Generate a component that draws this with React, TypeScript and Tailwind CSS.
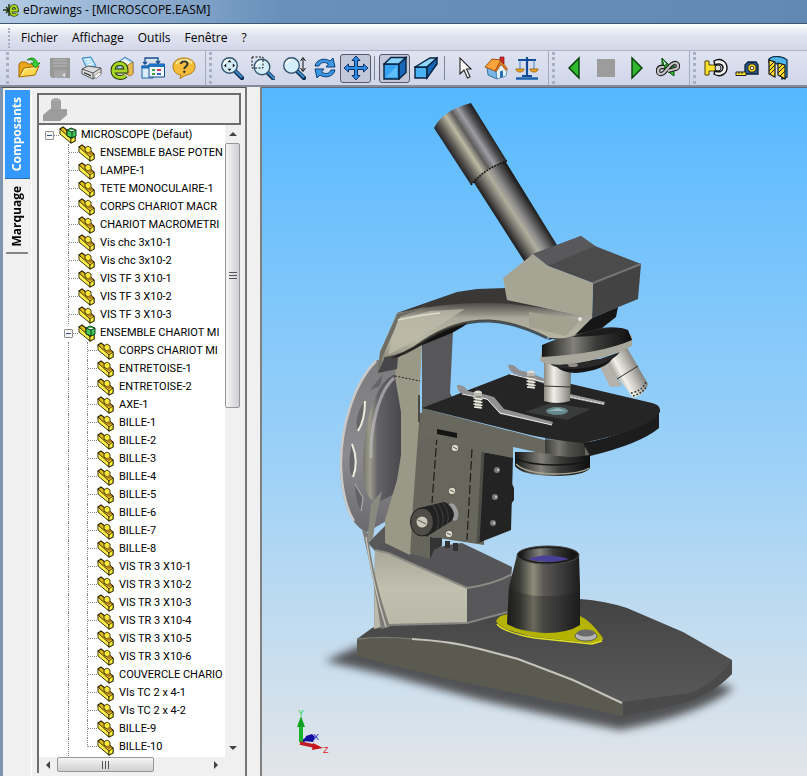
import type { ReactNode } from "react";
import { clsx } from "clsx";

type Part = {
  name: string;
  depth: number;
  assembly?: boolean;
};

const parts: Part[] = [
  { name: "MICROSCOPE (Défaut)", depth: 0, assembly: true },
  { name: "ENSEMBLE BASE POTEN", depth: 1 },
  { name: "LAMPE-1", depth: 1 },
  { name: "TETE MONOCULAIRE-1", depth: 1 },
  { name: "CORPS CHARIOT MACR", depth: 1 },
  { name: "CHARIOT MACROMETRI", depth: 1 },
  { name: "Vis chc 3x10-1", depth: 1 },
  { name: "Vis chc 3x10-2", depth: 1 },
  { name: "VIS TF 3 X10-1", depth: 1 },
  { name: "VIS TF 3 X10-2", depth: 1 },
  { name: "VIS TF 3 X10-3", depth: 1 },
  { name: "ENSEMBLE CHARIOT MI", depth: 1, assembly: true },
  { name: "CORPS CHARIOT MI", depth: 2 },
  { name: "ENTRETOISE-1", depth: 2 },
  { name: "ENTRETOISE-2", depth: 2 },
  { name: "AXE-1", depth: 2 },
  { name: "BILLE-1", depth: 2 },
  { name: "BILLE-2", depth: 2 },
  { name: "BILLE-3", depth: 2 },
  { name: "BILLE-4", depth: 2 },
  { name: "BILLE-5", depth: 2 },
  { name: "BILLE-6", depth: 2 },
  { name: "BILLE-7", depth: 2 },
  { name: "BILLE-8", depth: 2 },
  { name: "VIS TR 3 X10-1", depth: 2 },
  { name: "VIS TR 3 X10-2", depth: 2 },
  { name: "VIS TR 3 X10-3", depth: 2 },
  { name: "VIS TR 3 X10-4", depth: 2 },
  { name: "VIS TR 3 X10-5", depth: 2 },
  { name: "VIS TR 3 X10-6", depth: 2 },
  { name: "COUVERCLE CHARIO", depth: 2 },
  { name: "VIs TC 2 x 4-1", depth: 2 },
  { name: "VIs TC 2 x 4-2", depth: 2 },
  { name: "BILLE-9", depth: 2 },
  { name: "BILLE-10", depth: 2 },
];

const menus = ["Fichier", "Affichage", "Outils", "Fenêtre", "?"];

/* ---------- icons ---------- */

function Icon({ children }: { children: ReactNode }) {
  return (
    <svg viewBox="0 0 24 24" className="size-6" aria-hidden="true">
      {children}
    </svg>
  );
}

function Lens() {
  return (
    <>
      <path d="M15 15l7 7" stroke="#0c2c50" strokeWidth="4.400" strokeLinecap="round" />
      <path d="M16 15.500l5.500 5.500" stroke="#3f8fd0" strokeWidth="2" strokeLinecap="round" />
      <circle cx="9.500" cy="9.500" r="7.800" fill="#d4eefb" stroke="#35556f" strokeWidth="1.400" />
      <path d="M4 9a5.500 5.500 0 0 1 5-5" fill="none" stroke="#fff" strokeWidth="2" />
    </>
  );
}

const icons: Record<string, ReactNode> = {
  open: (
    <>
      <path d="M2 21V8l2-2h5l2 2h7v5" fill="#e8a81c" stroke="#a86a00" />
      <path d="M2 21l5-9 15-2-4 9z" fill="#ffd84f" stroke="#a86a00" />
      <path d="M4 20l4-7 11-1" fill="none" stroke="#fff3b0" />
      <path d="M10 4c5-4 10-1 10 3h3l-4.500 5L14 7h3c0-3-3-4-7-3z" fill="#35d435" stroke="#0d7a16" strokeWidth="0.800" />
    </>
  ),
  save: (
    <>
      <path d="M2 2h20v20H4l-2-2z" fill="#999" />
      <path d="M5 4h14M5 7h14M5 10h14" stroke="#b9b9b9" />
      <path d="M6 14h12v8H6z" fill="#a5a5a5" />
      <path d="M14 19l3-2v4z" fill="#e2e2e2" />
    </>
  ),
  print: (
    <>
      <path d="M3 2l9-1 5 9-9 3z" fill="#a8dcfb" stroke="#3c86bc" />
      <path d="M6 4l5-.5M7.500 6.500l5-1M8.500 9l6-1.500" stroke="#fff" />
      <path d="M3 13l6-3 13 2v6l-8 5-11-5z" fill="#dcdcdc" stroke="#555" />
      <path d="M3 13l11 4 8-5M14 17v6" fill="none" stroke="#555" />
      <path d="M5 16l7 3v1.500l-7-3z" fill="#444" />
      <path d="M15 20l5-3.500 3 1-6 5z" fill="#fff" stroke="#777" strokeWidth="0.700" />
    </>
  ),
  mail: (
    <>
      <path d="M7 7l8-6 8 5v11l-4 2L8 14z" fill="#9fd0f3" stroke="#4385b5" />
      <path d="M9 6l6-3 6 4-6 5z" fill="#fff" />
      <path d="M9 14l14-8v12l-3 2z" fill="#e9bb54" stroke="#a66d1a" strokeWidth="0.800" />
      <path d="M4.500 15H16c.3-5-2.500-7.500-6-7.500-4.200 0-7 3-7 7s2.800 7 7 7c2.500 0 4.500-.8 5.500-2" fill="none" stroke="#273700" strokeWidth="5" />
      <path d="M4.500 15H16c.3-5-2.500-7.500-6-7.500-4.200 0-7 3-7 7s2.800 7 7 7c2.500 0 4.500-.8 5.500-2" fill="none" stroke="#a8d624" strokeWidth="3" />
    </>
  ),
  window: (
    <>
      <path d="M4 8V2h13v5M2 6l2 2 2-2M15 5l2 2.500L19 5" fill="none" stroke="#174f8d" strokeWidth="1.300" />
      <path d="M1 10h11v12H1z" fill="#d9ecfb" stroke="#1660aa" />
      <path d="M0.500 9.500h9v3h-9z" fill="#1d6dbb" />
      <path d="M8 8h15.500v13H8z" fill="#f3f9ff" stroke="#104f95" />
      <path d="M8 8h15.500v3H8z" fill="#1e75c8" />
      <path d="M11 13h3v2h-3zM11 17h3v2h-3z" fill="#3f9d50" />
      <path d="M16 13h4v2h-4z" fill="#d43a62" />
      <path d="M16 17h4v2h-4z" fill="#3a61c4" />
    </>
  ),
  help: (
    <>
      <path d="M12 2c6.500 0 11 3.500 11 8.500S19 18.500 14 19l-6 3.500L9 19c-5-.5-8-4-8-8.500C1 5.500 5.500 2 12 2z" fill="#f3bd3b" stroke="#b37a14" />
      <path d="M4 8c2-4 11-6 16-1" fill="none" stroke="#ffe9a1" strokeWidth="2" />
      <path d="M9 8c0-3.500 6.500-3.500 6.500 0 0 2.500-3.200 2.500-3.200 5" fill="none" stroke="#333" strokeWidth="1.900" />
      <circle cx="12.300" cy="15.700" r="1.200" fill="#333" />
    </>
  ),
  zoomFit: (
    <>
      <Lens />
      <path d="M9.500 4L11.500 6.200h-4zM9.500 15L11.500 12.800h-4zM4 9.500L6.200 7.500v4zM15 9.500L12.800 7.500v4z" fill="#111" />
    </>
  ),
  zoomArea: (
    <>
      <g transform="translate(1.500 1.500)"><Lens /></g>
      <path d="M1 1h11v11H1z" fill="none" stroke="#111" strokeDasharray="2 1.500" />
    </>
  ),
  zoom: (
    <>
      <Lens />
      <path d="M21 2v13M18.500 5L21 1.500 23.500 5M18.500 12l2.500 3.500 2.500-3.500" fill="none" stroke="#111" />
    </>
  ),
  rotate: (
    <>
      <path d="M2 10c1-6 9-9 15-5l3-3 2 9h-9l2.500-3C11 5 7 7 6 10z" fill="#3c97e4" stroke="#0d3d78" />
      <path d="M22 14c-1 6-9 9-15 5l-3 3-2-9h9l-2.500 3c4.500 3 8.500 1 9.500-2z" fill="#3c97e4" stroke="#0d3d78" />
    </>
  ),
  pan: (
    <path
      d="M12 0l4 4.500h-2.500v6h6V8L24 12l-4.500 4v-2.500h-6v6H16L12 24l-4-4.500h2.500v-6h-6V16L0 12l4.500-4v2.500h6v-6H8z"
      fill="#2f8fe8"
      stroke="#082e63"
    />
  ),
  cube: (
    <>
      <path d="M1 8h15v15H1z" fill="#36a4f2" stroke="#06223f" strokeWidth="1.400" />
      <path d="M1 8l7-6.500h15L16 8z" fill="#8bd3ff" stroke="#06223f" strokeWidth="1.400" />
      <path d="M16 8l7-6.500v15L16 23z" fill="#1766b8" stroke="#06223f" strokeWidth="1.400" />
      <path d="M3 21l11-11v11z" fill="#71cbfd" opacity=".7" />
    </>
  ),
  perspective: (
    <>
      <path d="M1 11h12v11H1z" fill="#4bb1f5" stroke="#06223f" strokeWidth="1.400" />
      <path d="M1 11L16 2h7l-10 9z" fill="#91d7ff" stroke="#06223f" strokeWidth="1.400" />
      <path d="M13 11l10-9v6L13 22z" fill="#1765b6" stroke="#06223f" strokeWidth="1.400" />
    </>
  ),
  cursor: (
    <path d="M7 2v16l4-4 3.500 8 2.500-1.200L13.500 13H18z" fill="#fff" stroke="#222" strokeWidth="1.100" />
  ),
  home: (
    <>
      <path d="M3 11l9 4 1 8-9-4z" fill="#78b6e8" stroke="#205a92" strokeWidth="0.800" />
      <path d="M12 14l5-7 6 7-1 6-9 3z" fill="#e7f3fd" stroke="#4681b2" strokeWidth="0.800" />
      <path d="M1 11L8 3l9 1-6 11z" fill="#ffa43c" stroke="#a4500e" />
      <path d="M17 4l6.500 9-1.500 1.500-5-6-4.500 7L11 15z" fill="#d87b20" stroke="#8d4209" strokeWidth="0.600" />
      <path d="M16 1h4v7l-4-4z" fill="#d22626" stroke="#7c1111" strokeWidth="0.700" />
      <path d="M16 15.500l3-1V21l-3 .9z" fill="#2b6eb0" />
    </>
  ),
  scales: (
    <>
      <path d="M12 1v19M3 4h18M7 20h10" stroke="#134b96" strokeWidth="2.200" />
      <path d="M1 22.500h22" stroke="#1a60af" strokeWidth="2.500" />
      <path d="M5 4v9M19 4v9" stroke="#3f83c5" />
      <path d="M1 13h8c0 4-8 4-8 0zM15 13h8c0 4-8 4-8 0z" fill="#f4aa21" stroke="#8f5300" strokeWidth="0.800" />
    </>
  ),
  previous: <path d="M16 2v20L6 12z" fill="#31b82f" stroke="#053d08" strokeWidth="1.400" />,
  stop: <path d="M3 3h18v18H3z" fill="#9c9c9c" />,
  next: <path d="M7 2v20l10-10z" fill="#31b82f" stroke="#053d08" strokeWidth="1.400" />,
  loop: (
    <>
      <path d="M6 2v9l5-3zM6 2l9 9-6 3zM18 20V9l-8 5z" fill="#31b82f" stroke="#075d0c" />
      <path d="M8 11H5c-4 1-4 7 0 7 5 0 8-11 14-11 4 0 4 6 0 6l-7 2" fill="none" stroke="#222" strokeWidth="4.400" />
      <path d="M8 11H5c-4 1-4 7 0 7 5 0 8-11 14-11 4 0 4 6 0 6l-7 2" fill="none" stroke="#c4c4c4" strokeWidth="2.200" />
    </>
  ),
  caliper: (
    <>
      <path d="M1 5h4v4h7v6H5v4H1z" fill="#ffe12e" stroke="#4c4300" />
      <path d="M10 5c7-4 13 1 13 7 0 6-7 10-13 6l1-3c5 2 8 0 8-3.500S14 7 11 9z" fill="#f6f6f6" stroke="#111" strokeWidth="1.400" />
      <path d="M11 12a3 3 0 1 0 6 0 3 3 0 1 0-6 0" fill="#ddd" stroke="#222" />
    </>
  ),
  tape: (
    <>
      <path d="M10 18V9l3-3h8l2 3v9z" fill="#2f5b91" stroke="#0a2038" strokeWidth="1.300" />
      <circle cx="17" cy="12" r="4.200" fill="#ffdf28" stroke="#111" />
      <circle cx="17" cy="12" r="1.800" fill="#fff" stroke="#333" />
      <path d="M1 16h10v3.500H1z" fill="#ffe531" stroke="#222" />
      <path d="M4 16v2M7 16v2" stroke="#222" />
    </>
  ),
  section: (
    <>
      <path d="M3 3c4-4 14-3 18 1v17l-5 2V9L3 6z" fill="#4fb7ed" stroke="#0b2e4a" strokeWidth="1.300" />
      <path d="M3 4l6 2v15l-6-3zM12 7l7 2v14l-7-4z" fill="#ffd923" stroke="#151515" strokeWidth="1.200" />
      <path d="M3 11l5-5M3 15l6-6M4 18l5-5M12 13l5-5M12 17l7-7M14 20l5-5" stroke="#222" />
    </>
  ),
};

function PartIcon({ assembly }: { assembly?: boolean }) {
  return (
    <svg viewBox="0 0 18 18" className="size-[18px] shrink-0" aria-hidden="true">
      <path d="M1 3l3-2 4 3v3l3-1 5 4v5l-4 2z" fill="#e5bd0e" stroke="#2b2400" strokeWidth="1.200" />
      <path d="M1 3l11 10v4L1 8z" fill="#fff04b" stroke="#2b2400" strokeWidth="0.900" />
      <path d="M12 13l4-3v5l-4 2z" fill="#fff23c" stroke="#2b2400" strokeWidth="0.800" />
      {assembly ? (
        <path d="M8 4l4-2 5 2v6l-4 2-5-2zM8 4l5 2 4-2M13 6v6" fill="#43c75a" stroke="#083c12" />
      ) : (
        <>
          <path d="M7 4l3-2 3 2v4l-3 1-3-2z" fill="#ffe93c" stroke="#2b2400" strokeWidth="0.900" />
          <path d="M9 9l3-2 3 2-3 2z" fill="#a87a20" />
        </>
      )}
    </svg>
  );
}

/* ---------- toolbar ---------- */

type Tool = { icon: string; label: string; pressed?: boolean; disabled?: boolean };

function ToolButton({ icon, label, pressed, disabled }: Tool) {
  return (
    <button
      type="button"
      aria-label={label}
      aria-pressed={pressed}
      disabled={disabled}
      className={clsx(
        "flex h-[29px] w-[31px] shrink-0 items-center justify-center rounded-[3px]",
        pressed && "border border-[#555b6c] bg-[#c3c8d9]"
      )}
    >
      <Icon>{icons[icon]}</Icon>
    </button>
  );
}

function Grip() {
  return <div className="mr-1 h-8 border-l-3 border-dotted border-[#a9b0c4]" />;
}

function Divider() {
  return <div className="mx-[3px] h-6 w-0.5 border-l border-[#7f8799]" />;
}

function ToolGroup({ children }: { children: ReactNode }) {
  return (
    <div className="flex h-full items-center border-r border-[#a4abbd] pr-1.5 pl-[3px]">
      <Grip />
      {children}
    </div>
  );
}

function Toolbar() {
  return (
    <div className="flex h-9 shrink-0 border-b-2 border-[#858b98] bg-linear-to-b from-[#dfe3f1] to-[#d0d6e9] pl-[3px]">
      <ToolGroup>
        <ToolButton icon="open" label="Ouvrir" />
        <ToolButton icon="save" label="Enregistrer" disabled />
        <ToolButton icon="print" label="Imprimer" />
        <ToolButton icon="mail" label="Envoyer" />
        <ToolButton icon="window" label="Disposition" />
        <ToolButton icon="help" label="Aide" />
      </ToolGroup>
      <ToolGroup>
        <ToolButton icon="zoomFit" label="Zoom au mieux" />
        <ToolButton icon="zoomArea" label="Zoom fenêtre" />
        <ToolButton icon="zoom" label="Zoom avant/arrière" />
        <ToolButton icon="rotate" label="Rotation" />
        <ToolButton icon="pan" label="Translation" pressed />
        <Divider />
        <ToolButton icon="cube" label="Ombré" pressed />
        <ToolButton icon="perspective" label="Perspective" />
        <Divider />
        <ToolButton icon="cursor" label="Sélectionner" />
        <ToolButton icon="home" label="Accueil" />
        <ToolButton icon="scales" label="Propriétés de masse" />
      </ToolGroup>
      <ToolGroup>
        <ToolButton icon="previous" label="Précédent" />
        <ToolButton icon="stop" label="Arrêter" disabled />
        <ToolButton icon="next" label="Suivant" />
        <ToolButton icon="loop" label="Lecture continue" />
      </ToolGroup>
      <div className="flex h-full items-center pl-[3px]">
        <Grip />
        <ToolButton icon="caliper" label="Déplacer" />
        <ToolButton icon="tape" label="Mesurer" />
        <ToolButton icon="section" label="Section" />
      </div>
    </div>
  );
}

/* ---------- component tree ---------- */

function Guide({ line = true }: { line?: boolean }) {
  return (
    <span className="flex h-full w-[19px] shrink-0 justify-end">
      <span className={clsx("h-full w-2.5 border-dotted border-[#888]", line && "border-l")} />
    </span>
  );
}

function Branch({ last }: { last?: boolean }) {
  return (
    <span className="flex h-full w-[19px] shrink-0 justify-end">
      <span className={clsx("w-2.5 border-l border-dotted border-[#888]", last ? "h-1/2" : "h-full")}>
        <span className={clsx("block border-b border-dotted border-[#888]", last ? "h-full" : "h-1/2")} />
      </span>
    </span>
  );
}

function Expander({ name }: { name: string }) {
  return (
    <span className="flex h-full w-[19px] shrink-0 items-center justify-end">
      <button
        type="button"
        aria-label={`Réduire ${name}`}
        className="flex size-[9px] shrink-0 items-center justify-center rounded-[1px] border border-[#919191] bg-[#f7f7f7]"
      >
        <span className="h-px w-[5px] bg-[#35518c]" />
      </button>
      <span className="w-[5px] border-t border-dotted border-[#888]" />
    </span>
  );
}

function TreeRow({ part, last }: { part: Part; last: boolean }) {
  return (
    <li role="treeitem" className="flex h-[18px] items-center whitespace-nowrap">
      {part.depth > 0 && <Guide line={false} />}
      {part.depth > 1 && <Guide />}
      {part.assembly ? <Expander name={part.name} /> : <Branch last={last} />}
      <PartIcon assembly={part.assembly} />
      <span className="pl-1">{part.name}</span>
    </li>
  );
}

function Arrow({ className }: { className?: string }) {
  return (
    <svg viewBox="0 0 8 8" className={clsx("size-2", className)} aria-hidden="true">
      <path d="M0 6l4-4 4 4z" fill="#444" />
    </svg>
  );
}

function TreePanel() {
  return (
    <div className="flex min-h-0 min-w-0 flex-1 flex-col border-t-2 border-l-2 border-[#6d6d6d] bg-white">
      <div className="flex h-[30px] shrink-0 items-center border-r-2 border-b-2 border-[#6d6d6d] bg-[#efefef] pl-1">
        <svg viewBox="0 0 24 24" className="size-6" aria-hidden="true">
          <ellipse cx="13" cy="4" rx="5" ry="3" fill="#aaa" />
          <path d="M8 4h10v8H8z" fill="#a0a0a0" />
          <path d="M0 18l7-6h17v6l-7 6H0z" fill="#9c9c9c" />
        </svg>
      </div>
      <div className="flex min-h-0 flex-1">
        <ul
          role="tree"
          aria-label="Composants"
          className="min-w-0 flex-1 overflow-hidden pt-px pl-px font-[Roboto,sans-serif] text-[11px] text-black"
        >
          {parts.map((part, i) => (
            <TreeRow key={part.name} part={part} last={i === parts.length - 1} />
          ))}
        </ul>
        <div className="flex w-4 shrink-0 flex-col bg-[#f0f0f0]">
          <button type="button" aria-label="Défiler vers le haut" className="flex h-[18px] items-center justify-center">
            <Arrow />
          </button>
          <div className="flex h-[42%] w-[15px] flex-col items-center justify-center gap-0.5 rounded-xs border border-[#979797] bg-linear-to-r from-[#f5f5f5] to-[#cfd0d3]">
            <span className="h-px w-2 bg-[#555]" />
            <span className="h-px w-2 bg-[#555]" />
            <span className="h-px w-2 bg-[#555]" />
          </div>
          <button type="button" aria-label="Défiler vers le bas" className="mt-auto flex h-[18px] items-center justify-center">
            <Arrow className="rotate-180" />
          </button>
        </div>
      </div>
      <div className="flex h-4 shrink-0 bg-[#f0f0f0]">
        <button type="button" aria-label="Défiler à gauche" className="flex w-[18px] items-center justify-center">
          <Arrow className="-rotate-90" />
        </button>
        <div className="flex h-[15px] w-[48%] items-center justify-center gap-0.5 rounded-xs border border-[#979797] bg-linear-to-b from-[#f5f5f5] to-[#cfd0d3]">
          <span className="h-2 w-px bg-[#555]" />
          <span className="h-2 w-px bg-[#555]" />
          <span className="h-2 w-px bg-[#555]" />
        </div>
        <button type="button" aria-label="Défiler à droite" className="mr-4 ml-auto flex w-[18px] items-center justify-center">
          <Arrow className="rotate-90" />
        </button>
      </div>
    </div>
  );
}

function Sidebar() {
  return (
    <aside className="flex w-[247px] shrink-0 border-t border-r-2 border-l-[3px] border-t-[#555] border-r-[#777] border-l-[#7d95ae] bg-[#f0f0f0] pt-0.5">
      <div className="flex w-7 shrink-0 flex-col items-center font-['Open_Sans',sans-serif] text-xs font-bold">
        <button
          type="button"
          className="flex h-[89px] w-[25px] items-center justify-center border-b border-[#2b6dad] bg-[#3399ff] text-white"
        >
          <span className="rotate-180 [writing-mode:vertical-rl]">Composants</span>
        </button>
        <button
          type="button"
          className="mt-0.5 flex h-[73px] w-[22px] items-center justify-center border-b-2 border-[#858585] bg-[#f2f2f2] text-black"
        >
          <span className="rotate-180 [writing-mode:vertical-rl]">Marquage</span>
        </button>
      </div>
      <div className="flex min-w-0 flex-1 border-l border-white pt-[3px] pr-1 pb-[3px] pl-[5px]">
        <TreePanel />
      </div>
    </aside>
  );
}

/* ---------- 3D view ---------- */

function Spring({ x, y }: { x: number; y: number }) {
  return (
    <g transform={`translate(${x} ${y})`}>
      <path d="M-3 0h6v15h-6z" fill="#8d8c86" />
      <path d="M-4.500 6l9 1.500M-4.500 9l9 1.500M-4.500 12l9 1.500M-4 15l8 1" stroke="#f0efe8" strokeWidth="1.600" />
      <ellipse cx="0" cy="1" rx="4" ry="2.500" fill="#dddcd4" />
      <path d="M-4 1h8v3h-8z" fill="#b9b8b0" />
    </g>
  );
}

function Microscope() {
  return (
    <svg viewBox="262 88 545 688" className="h-full w-full" role="img" aria-label="Microscope">
      <defs>
        <linearGradient id="eyepiece" gradientUnits="userSpaceOnUse" x1="436" y1="130" x2="473" y2="106">
          <stop offset="0" stopColor="#28272a" />
          <stop offset=".15" stopColor="#5c5a54" />
          <stop offset=".36" stopColor="#bcb9a4" />
          <stop offset=".52" stopColor="#5e5d5c" />
          <stop offset=".68" stopColor="#9d9da4" />
          <stop offset=".85" stopColor="#4c4b4e" />
          <stop offset="1" stopColor="#1d1c1c" />
        </linearGradient>
        <linearGradient id="tube" gradientUnits="userSpaceOnUse" x1="475" y1="184" x2="506" y2="164">
          <stop offset="0" stopColor="#1f1f1f" />
          <stop offset=".3" stopColor="#85827a" />
          <stop offset=".45" stopColor="#b0ae9c" />
          <stop offset=".62" stopColor="#8c8b8c" />
          <stop offset=".85" stopColor="#474545" />
          <stop offset="1" stopColor="#191919" />
        </linearGradient>
        <linearGradient id="arm" x1="0" y1="0" x2="0" y2="1">
          <stop offset="0" stopColor="#4b4a48" />
          <stop offset=".22" stopColor="#aaa89a" />
          <stop offset=".55" stopColor="#b9b7a3" />
          <stop offset="1" stopColor="#6c6b60" />
        </linearGradient>
        <linearGradient id="metal" x1="0" y1="0" x2="1" y2="0">
          <stop offset="0" stopColor="#8c8a80" />
          <stop offset=".35" stopColor="#f0efe8" />
          <stop offset=".65" stopColor="#bdbcb6" />
          <stop offset="1" stopColor="#77766f" />
        </linearGradient>
        <linearGradient id="metalTilt" gradientUnits="userSpaceOnUse" x1="612" y1="375" x2="639" y2="361">
          <stop offset="0" stopColor="#8f8d83" />
          <stop offset=".3" stopColor="#f1f0e9" />
          <stop offset=".6" stopColor="#bdbcb5" />
          <stop offset="1" stopColor="#6d6c68" />
        </linearGradient>
        <linearGradient id="black" x1="0" y1="0" x2="1" y2="0">
          <stop offset="0" stopColor="#141414" />
          <stop offset=".35" stopColor="#82817b" />
          <stop offset=".6" stopColor="#3a3a39" />
          <stop offset="1" stopColor="#0e0e0e" />
        </linearGradient>
        <linearGradient id="lamp" x1="0" y1="0" x2="1" y2="0">
          <stop offset="0" stopColor="#1e1e1d" />
          <stop offset=".17" stopColor="#3b3b37" />
          <stop offset=".36" stopColor="#8d8c7a" />
          <stop offset=".5" stopColor="#5a5956" />
          <stop offset=".75" stopColor="#3c3b3c" />
          <stop offset="1" stopColor="#1d1d1d" />
        </linearGradient>
        <linearGradient id="dome" x1="0" y1="0" x2="1" y2="0">
          <stop offset="0" stopColor="#76756c" />
          <stop offset=".18" stopColor="#9d9c8c" />
          <stop offset=".38" stopColor="#626267" />
          <stop offset="1" stopColor="#48484c" />
        </linearGradient>
        <linearGradient id="wheel" x1="0" y1="0" x2="0" y2="1">
          <stop offset="0" stopColor="#7c7c7e" />
          <stop offset=".55" stopColor="#8b8b8f" />
          <stop offset="1" stopColor="#6b6b6f" />
        </linearGradient>
        <linearGradient id="baseTop" x1="0" y1="0" x2="0" y2="1">
          <stop offset="0" stopColor="#434343" />
          <stop offset="1" stopColor="#5b5b5b" />
        </linearGradient>
        <linearGradient id="foot" x1="0" y1="0" x2="0" y2="1">
          <stop offset="0" stopColor="#aaa899" />
          <stop offset=".5" stopColor="#c1bfae" />
          <stop offset="1" stopColor="#b9b7a7" />
        </linearGradient>
        <filter id="soft" x="-10%" y="-20%" width="120%" height="140%">
          <feGaussianBlur stdDeviation="4" />
        </filter>
      </defs>

      {/* shadow */}
      <path d="M325 661L372 640 600 650 734 688Q700 715 620 730Q560 718 480 700L390 676z" fill="#4b4c4e" filter="url(#soft)" opacity=".95" />

      {/* base plate */}
      <path d="M357 639L372 628 388 622 480 606 508 597 580 599Q606 601 627 608L683 632 732 660 731 674Q712 695 680 703L623 716Q560 690 480 676L357 656z" fill="url(#baseTop)" />
      <path d="M623 702L690 693Q715 683 732 661V674Q712 695 680 704L623 716z" fill="#4a4a4a" />
      <path d="M357 639Q440 636 480 649L518 659 573 680 622 703V716Q570 704 520 694 430 676 357 656z" fill="#5b5a50" />
      <path d="M412 639Q450 641 480 649L518 659 573 680 622 703" fill="none" stroke="#c5c4bb" strokeWidth="2" />
      <path d="M357 639Q385 636 412 639" fill="none" stroke="#77766f" strokeWidth="1.500" />

      {/* hand wheel */}
      <path d="M377 360C353 382 339 430 340 470 342 505 352 527 367 532L397 515 405 362z" fill="url(#wheel)" />
      <path d="M376 361C353 384 340 430 341 468 342 490 347 510 354 521" fill="none" stroke="#c9c9c9" strokeWidth="2.500" />
      <path d="M397 374C377 378 363 420 363 465 363 490 368 500 377 503L402 490V374z" fill="url(#dome)" />
      <path d="M394 378C378 392 370 430 371 458" fill="none" stroke="#b9b9bc" strokeWidth="3" opacity=".7" />
      <path d="M365 401C356 412 355 425 358 431 363 425 366 412 365 401zM352 444C348 458 349 473 353 477 357 468 356 454 352 444zM383 374L370 390 380 386z" fill="#66666a" />
      <path d="M365 401Q365 420 358 431M352 444Q359 462 353 477" fill="none" stroke="#eeeede" strokeWidth="2" />
      <path d="M355 484Q355 500 361 511L363 498z" fill="#626266" />
      <path d="M355 484L363 498 361 511" fill="none" stroke="#b6b6b7" />

      {/* foot of the arm */}
      <path d="M368 543L386 525 386 545 376 552z" fill="#59595a" />
      <path d="M375 550L385 542 410 554 448 545 462 543 512 567 508 613 467 624 388 626 374 630z" fill="#555557" />
      <path d="M375 550L388 553 467 588V623L388 625 374 629z" fill="url(#foot)" />
      <path d="M467 588L512 576 508 612 467 623z" fill="#57575a" />
      <path d="M375 550L388 553 467 588Q495 584 512 574" fill="none" stroke="#8b8b84" strokeWidth="2" />
      <path d="M388 625L467 623 508 612" fill="none" stroke="#85857f" strokeWidth="2" />
      <path d="M362 529L368 533Q372 575 390 627L381 629Q374 580 362 529z" fill="#7c7b76" />
      <path d="M366 537Q372 582 386 627" fill="none" stroke="#c3c2b9" strokeWidth="1.500" />
      <path d="M382 491L371 504 367 543 373 538 376 518z" fill="#8a8980" />

      {/* column */}
      <path d="M422 343L453 331 450 393 452 397 422 410z" fill="#57575a" />
      <path d="M418 412L483 430 484 545 432 537 430 559 408 553z" fill="#67665d" />
      <path d="M397 355L422 341 420 384 419 422 413 505 410 555 385 543V520L397 480 401 455V412L395 377z" fill="#9a9988" />
      <path d="M395 376L420 381" stroke="#222" strokeDasharray="2 1.500" />
      <path d="M419 395L419 422" stroke="#4b4a45" strokeWidth="2" />
      <path d="M430 537L442 538V546L434 550 430 559z" fill="#343434" />
      <path d="M445 541h5v7h-5zM453 543h5v8h-5z" fill="#333" />

      {/* carriage */}
      <path d="M436 430L483 444V532L478 543 444 538 432 533z" fill="#68675d" />
      <path d="M483 452L513 457 511 530 478 543z" fill="#232323" />
      <path d="M483 452L478 543" stroke="#4e4e49" strokeWidth="3" />
      <path d="M437 436L432 503M472 449L467 540" stroke="#1e1e1e" strokeWidth="1.200" strokeDasharray="9 3" />
      {[[455, 448], [452, 491], [449, 534]].map(([x, y]) => (
        <g key={y}>
          <circle cx={x} cy={y} r="3.800" fill="#dddccb" stroke="#333" strokeWidth="0.700" />
          <path d={`M${x - 2} ${y - 1}l4 2`} stroke="#55544c" />
        </g>
      ))}
      {[[497, 470], [495, 497], [493, 523]].map(([x, y]) => (
        <g key={y}>
          <circle cx={x} cy={y} r="3" fill="#77787a" />
          <circle cx={x + 1} cy={y} r="1.200" fill="#bbb" />
        </g>
      ))}
      <path d="M512 484l2 4v12l-3 4z" fill="#222" />

      {/* focus knob */}
      <ellipse cx="453" cy="512" rx="5" ry="9" transform="rotate(-15 453 512)" fill="#9b9b9e" />
      <path d="M419 508L444 502Q452 505 454 514 454 519 450 522L426 537z" fill="#222" />
      <path d="M433 505q8 11 4 25M438 504q8 11 4 23M443 503q8 11 4 21" fill="none" stroke="#414141" />
      <ellipse cx="422" cy="522" rx="11.500" ry="14" fill="#4d4c46" stroke="#1e1e1e" />
      <circle cx="422" cy="522" r="5.500" fill="#c9c8ba" />
      <path d="M418 520l8 4" stroke="#55544c" />

      {/* condenser */}
      <path d="M515 452H590V468Q584 476 553 476 521 475 515 466z" fill="url(#black)" />
      <path d="M516 464Q525 473 553 474 580 474 589 468" fill="none" stroke="#a7a593" strokeWidth="1.500" />
      <path d="M516 459Q540 469 589 462" fill="none" stroke="#161616" strokeWidth="1.500" />

      {/* stage */}
      <path d="M422 408L545 440 590 441V455Q567 459 545 454L513 447V458L483 452 421 436z" fill="#69685f" />
      <path d="M437 429L457 433V438L437 434z" fill="#151515" />
      <path d="M545 438L585 439V456Q562 458 545 453z" fill="url(#black)" opacity=".55" />
      <path d="M583 443Q630 435 659 411V428Q640 444 590 456z" fill="#1d1d1d" />
      <path d="M422 408L510 374 567 383 652 403Q661 405 660 412 650 429 583 443 552 440 530 435z" fill="#252525" />
      <path d="M525 412L551 403 591 409 567 420z" fill="#3a3b3b" />
      <ellipse cx="557" cy="411" rx="11" ry="4" fill="#65888b" />
      <path d="M548 411l10-3 7 3z" fill="#96b8ba" />

      {/* slide clips */}
      <path d="M508 365Q514 364 519 370L531 373 545 379V384L519 375Q510 374 508 365z" fill="#8f8f92" />
      <path d="M510 374l34 8" stroke="#eee" />
      <path d="M570 394L605 402 604 405 570 398z" fill="#9c9c9c" />
      <path d="M570 397l34 7" stroke="#e8e8e8" strokeDasharray="3 1" />
      <path d="M457 385Q464 384 468 391L487 395 494 397 504 409 553 422 552 425 500 414 488 400 463 394Q457 392 457 385z" fill="#919194" />
      <path d="M462 394L487 399 500 413 552 425" fill="none" stroke="#e9e9e5" />
      <Spring x={478} y={392} />
      <Spring x={531} y={372} />

      {/* objectives */}
      <path d="M599 365L608 358 622 386 610 387z" fill="#b3b2aa" />
      <path d="M606 361L626 346 648 384Q645 394 633 398z" fill="url(#metalTilt)" />
      <path d="M617 379L638 366" stroke="#302f2d" />
      <path d="M631 393q11-2 15-11M633 396q10-3 14-10" fill="none" stroke="#222" strokeDasharray="1.500 2" strokeWidth="1.500" />
      <path d="M544 362H571.500L570 401Q557 405 544 401z" fill="url(#metal)" />
      <path d="M544 386L570 387" stroke="#33322f" />

      {/* revolving nosepiece */}
      <path d="M546 338L572 342 592 330 570 335z" fill="#1a1a1a" />
      <path d="M556 366Q585 358 612 359 605 370 576 373 562 373 556 366z" fill="#151515" />
      <path d="M542 350Q580 351 632 335L632 346Q606 359 573 364 548 366 540 361z" fill="#a8a79c" />
      <path d="M550 364Q570 367 600 359L620 352Q608 367 573 369 556 369 550 364z" fill="#292929" />
      <path d="M542 345Q560 337 593 329 616 325 628 330L632 340Q600 354 542 357z" fill="url(#black)" />
      <path d="M572 337Q595 328 616 328 624 328 627 331 605 336 572 337z" fill="#1c1c1c" />
      <ellipse cx="573" cy="365" rx="5" ry="2" fill="#8f8e88" />

      {/* arm */}
      <path d="M547 340L592 318 618 307 616 317 602 328 575 335z" fill="#161616" />
      <path d="M385 361L420 342 440 330 470 321 464 326 452 333 422 345 400 356 378 372z" fill="#111" />
      <path d="M397 313L457 292 477 289 507 288 530 304 594 320 540 312 460 308z" fill="#393837" />
      <path d="M397 313Q450 301 500 303 550 307 592 318L575 335Q560 341 547 337 515 322 490 321 455 320 422 342 400 356 384 359L378 372 380 352z" fill="url(#arm)" />
      <path d="M397 314L428 306 400 317 383 356 378 371 380 352z" fill="#6f6e66" />
      <path d="M398 319L430 311 465 309 440 325 415 341 388 355z" fill="#bdbbaa" opacity=".75" />
      <path d="M398 320Q420 315 440 313" fill="none" stroke="#dddccf" strokeWidth="1.500" />
      <path d="M384 359Q405 356 424 341 455 320 490 321 515 322 547 338" fill="none" stroke="#2c2b28" strokeWidth="3" opacity=".75" />
      <path d="M529 312L580 320 566 336 529 327z" fill="#a3a291" />
      <circle cx="580" cy="319" r="2" fill="#e5e4db" />
      <path d="M384 359L398 357 397 369 378 373z" fill="#47474a" />

      {/* eyepiece tube */}
      <path d="M469 175L501 154 557 245 526 264z" fill="url(#tube)" />
      <path d="M434 128Q443 110 471 103L507 161Q484 167 471 185z" fill="url(#eyepiece)" />
      <path d="M471 185Q485 168 507 161" fill="none" stroke="#161616" strokeWidth="1.500" strokeDasharray="2 1" />

      {/* head */}
      <path d="M533 254L581 236 595 246 641 264 593 283 548 266z" fill="#4b4b4c" />
      <path d="M533 254L581 236 595 246 548 266z" fill="#59595b" />
      <path d="M593 283L641 264 638 299 592 318z" fill="#434344" />
      <path d="M593 283L641 264" stroke="#747477" strokeWidth="2" />
      <path d="M503 278L533 254 548 266 593 283 592 318 507 300z" fill="#a6a594" />

      {/* lamp */}
      <path d="M496 621Q498 615 510 614L580 616Q590 620 603 638 603 644 590 643L535 637Q500 630 496 621z" fill="#b4b400" />
      <path d="M497 624Q503 632 535 638L592 644 602 641" fill="none" stroke="#e2e22a" strokeWidth="1.500" />
      <path d="M517 555L509 587 507 624Q520 632 545 633 568 633 580 625V587L579 555z" fill="url(#lamp)" />
      <path d="M509 589Q540 602 580 592V625Q568 633 545 633 520 632 507 624z" fill="#1c1c1c" opacity=".3" />
      <ellipse cx="548" cy="555" rx="31" ry="9" fill="#1b1b1b" stroke="#494947" />
      <ellipse cx="548" cy="555" rx="28" ry="7" fill="url(#black)" />
      <path d="M528 559Q545 552 569 559 550 565 528 559z" fill="#4a409a" />
      <ellipse cx="586" cy="636" rx="11" ry="5" fill="#b7b6b6" stroke="#5d5d5d" />
      <ellipse cx="586" cy="633" rx="9" ry="3.500" fill="#6b6a6b" />

      {/* axes */}
      <path d="M301 742L310 737" stroke="#1717a0" strokeWidth="3" />
      <path d="M304 741l2-5 6-2 3 3-2 5z" fill="#1010a0" />
      <path d="M301 742V722" stroke="#18b52c" strokeWidth="4" />
      <path d="M301 716l-4 11h8z" fill="#12a025" />
      <path d="M300 743L314 746" stroke="#bd1c22" strokeWidth="3.500" />
      <path d="M323 748l-10-5-1 7z" fill="#c9161d" />
      <g fontFamily="Liberation Sans, Arial, sans-serif" fontSize="9">
        <text x="298" y="716" fill="#20d64a">Y</text>
        <text x="313" y="740" fill="#2525c4">X</text>
        <text x="323" y="753" fill="#e0222e">Z</text>
      </g>
    </svg>
  );
}

export default function App() {
  return (
    <div className="flex h-screen min-w-0 flex-col overflow-hidden bg-[#f0f0f0] font-['Open_Sans',sans-serif] text-xs text-black">
      <header className="flex h-6 shrink-0 items-center gap-1 border-b border-[#3f5571] bg-linear-to-r from-[#b5cce5] via-[#6890ba] via-35% to-[#6189b3] pb-1 pl-[3px]">
        <svg viewBox="0 0 16 16" className="size-4" aria-hidden="true">
          <path d="M0 8h5M3 5l3 3-3 3M6 2v12" fill="none" stroke="#26330a" strokeWidth="1.500" />
          <path d="M8.500 8.500H14c0-3-1-4.500-3-4.500-2 0-3.200 2-3.200 4.500S9 13 11 13c1.500 0 2.500-.5 3-1.500" fill="none" stroke="#273700" strokeWidth="3.600" />
          <path d="M8.500 8.500H14c0-3-1-4.500-3-4.500-2 0-3.200 2-3.200 4.500S9 13 11 13c1.500 0 2.500-.5 3-1.500" fill="none" stroke="#a8d624" strokeWidth="1.800" />
        </svg>
        <h1>eDrawings - [MICROSCOPE.EASM]</h1>
      </header>
      <nav className="flex h-[27px] shrink-0 items-center border-b border-[#adb4c5] bg-linear-to-b from-white via-[#dfe3ef] via-45% to-[#d3d7ea] pt-0.5 pl-2">
        <div className="mr-1 h-5 border-l-2 border-dotted border-[#a9b0c4]" />
        {menus.map((menu) => (
          <button key={menu} type="button" className="px-[7px] leading-5">
            {menu}
          </button>
        ))}
      </nav>
      <Toolbar />
      <div className="flex min-h-0 flex-1">
        <Sidebar />
        <div className="w-[15px] shrink-0 border-r-2 border-[#808080] bg-[#f0f0f0]" />
        <main className="min-w-0 flex-1 border-t border-[#5c6b78] bg-linear-to-b from-[#54b8ff] via-[#9dd1f7] via-55% to-[#e2e5e8]">
          <Microscope />
        </main>
      </div>
    </div>
  );
}
